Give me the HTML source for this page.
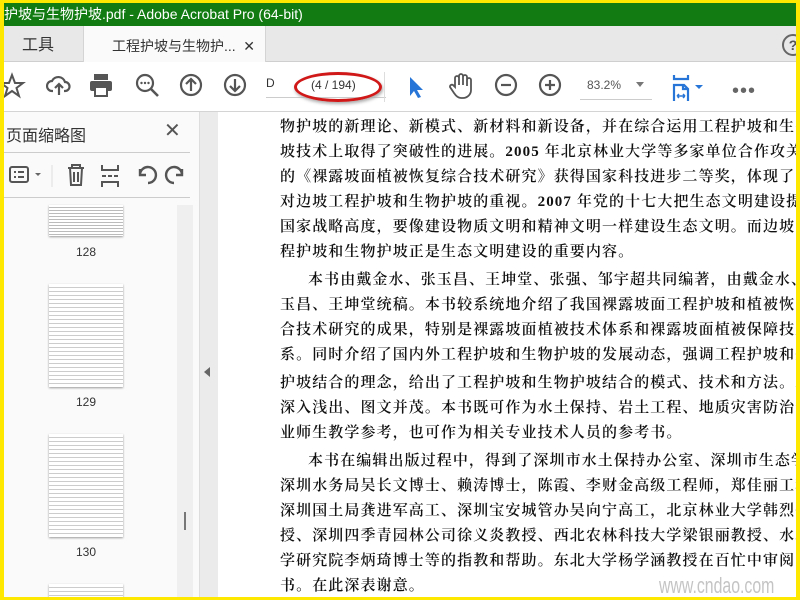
<!DOCTYPE html>
<html><head><meta charset="utf-8"><style>
*{margin:0;padding:0;box-sizing:border-box}
body{width:800px;height:600px;overflow:hidden;background:#ffe800;position:relative;font-family:"Liberation Sans","Noto Sans CJK SC",sans-serif}
#app{position:absolute;left:4px;top:3px;width:792px;height:594px;background:#fff;overflow:hidden}
#title{position:absolute;left:0;top:0;width:792px;height:23px;background:#127c12;color:#fff;font-size:14px;line-height:23px;padding-left:0;white-space:nowrap}
#tabs{position:absolute;left:0;top:23px;width:792px;height:36px;background:#e8e8e8;border-bottom:1px solid #cfcfcf}
#tools{position:absolute;left:0;top:0;width:79px;height:36px;font-size:16px;color:#333;line-height:40px;padding-left:18px}
#tab{position:absolute;left:79px;top:0;width:183px;height:37px;background:#fafafa;border-left:1px solid #d4d4d4;border-right:1px solid #d4d4d4;font-size:14px;color:#333;line-height:40px;padding-left:28px}
#tab span{position:absolute;right:10px;top:0;font-size:14px}
#help{position:absolute;right:-8px;top:8px;width:22px;height:22px;border:2px solid #666;border-radius:50%;font-weight:bold;color:#555;font-size:14px;text-align:center;line-height:18px}
#tb{position:absolute;left:0;top:59px;width:792px;height:50px;background:#fff;border-bottom:1px solid #d4d4d4}
.ic{position:absolute;top:10px}
#panel{position:absolute;left:0;top:109px;width:196px;height:485px;background:#fafafa;border-right:1px solid #ddd}
#gut{position:absolute;left:196px;top:109px;width:18px;height:485px;background:#ebebeb}
#page{position:absolute;left:214px;top:109px;width:578px;height:485px;background:#fff;overflow:hidden}
.ln{position:absolute;left:62px;white-space:nowrap;font-family:"Liberation Serif","Noto Serif CJK SC",serif;font-size:15px;letter-spacing:1.1px;color:#111;font-weight:600}
.thumb{position:absolute;left:45px;width:74px;background:#fff;box-shadow:0 1px 2px #999}
.num{position:absolute;left:0;width:170px;text-align:center;font-size:12px;color:#333}
</style></head><body><div id="app">
<div id="title">护坡与生物护坡.pdf - Adobe Acrobat Pro (64-bit)</div>
<div id="tabs"><div id="tools">工具</div><div id="tab">工程护坡与生物护...<span>✕</span></div><div id="help">?</div></div>
<div id="tb">
<svg class="ic" style="left:-6px" width="28" height="28" viewBox="0 0 28 28"><path d="M14 3l3 8h8l-6.5 5 2.5 8-7-5-7 5 2.5-8L3 11h8z" fill="none" stroke="#555" stroke-width="2"/></svg>
<svg class="ic" style="left:42px" width="26" height="26" viewBox="0 0 26 26"><path d="M7 19H6a5 5 0 0 1 0-10 7 7 0 0 1 13 1 4.5 4.5 0 0 1 0 9h-1M13 23V12M9 16l4-4 4 4" fill="none" stroke="#555" stroke-width="2.2"/></svg>
<svg class="ic" style="left:84px" width="26" height="26" viewBox="0 0 26 26"><rect x="6" y="2" width="14" height="6" fill="#555"/><rect x="2" y="9" width="22" height="10" rx="2" fill="#555"/><rect x="7" y="15" width="12" height="9" fill="#fff" stroke="#555" stroke-width="2"/></svg>
<svg class="ic" style="left:130px" width="26" height="26" viewBox="0 0 26 26"><circle cx="11" cy="11" r="8" fill="none" stroke="#555" stroke-width="2.2"/><path d="M17 17l7 7" stroke="#555" stroke-width="2.6"/><circle cx="7.5" cy="11" r="1.2" fill="#555"/><circle cx="11" cy="11" r="1.2" fill="#555"/><circle cx="14.5" cy="11" r="1.2" fill="#555"/></svg>
<svg class="ic" style="left:174px" width="26" height="26" viewBox="0 0 26 26"><circle cx="13" cy="13" r="10" fill="none" stroke="#555" stroke-width="2.2"/><path d="M13 19V7M8 12l5-5 5 5" fill="none" stroke="#555" stroke-width="2.2"/></svg>
<svg class="ic" style="left:218px" width="26" height="26" viewBox="0 0 26 26"><circle cx="13" cy="13" r="10" fill="none" stroke="#555" stroke-width="2.2"/><path d="M13 7v12M8 14l5 5 5-5" fill="none" stroke="#555" stroke-width="2.2"/></svg>
<div style="position:absolute;left:262px;top:14px;width:120px;height:22px;border-bottom:1px solid #ccc;font-size:12px;color:#333">D<span style="position:absolute;left:45px;top:2px">(4 / 194)</span></div>
<div style="position:absolute;left:290px;top:10px;width:88px;height:30px;border:3px solid #d01818;border-radius:50%;box-shadow:1px 2px 3px #aaa"></div>
<div style="position:absolute;left:380px;top:10px;width:1px;height:30px;background:#ddd"></div>
<svg class="ic" style="left:402px;top:13px" width="20" height="24" viewBox="0 0 20 24"><path d="M4 2v19l4-5 4 7 3-1-4-7h6z" fill="#2775d6"/></svg>
<svg class="ic" style="left:444px" width="26" height="28" viewBox="0 0 26 28"><path d="M7 15V6a2 2 0 0 1 4 0v7V4a2 2 0 0 1 4 0v9V5a2 2 0 0 1 4 0v9V8a2 2 0 0 1 4 0v10a8 8 0 0 1-8 8h-2c-3 0-5-2-7-5l-4-6a2 2 0 0 1 3-2z" fill="none" stroke="#555" stroke-width="1.8"/></svg>
<svg class="ic" style="left:489px" width="26" height="26" viewBox="0 0 26 26"><circle cx="13" cy="13" r="10" fill="none" stroke="#555" stroke-width="2.2"/><path d="M8 13h10" stroke="#555" stroke-width="2.2"/></svg>
<svg class="ic" style="left:533px" width="26" height="26" viewBox="0 0 26 26"><circle cx="13" cy="13" r="10" fill="none" stroke="#555" stroke-width="2.2"/><path d="M8 13h10M13 8v10" stroke="#555" stroke-width="2.2"/></svg>
<div style="position:absolute;left:576px;top:14px;width:72px;height:24px;border-bottom:1px solid #ccc;font-size:12px;color:#555;padding-left:7px;line-height:18px">83.2%<span style="position:absolute;right:8px;top:6px;border:4px solid transparent;border-top:5px solid #777"></span></div>
<svg class="ic" style="left:668px;top:13px" width="36" height="26" viewBox="0 0 36 26"><path d="M2 0v4h14V0M2 26V10h10l4 4v12M11 10v4h5" fill="none" stroke="#2775d6" stroke-width="2.2"/><path d="M5 21h8M5 21l2-2M5 21l2 2M13 21l-2-2M13 21l-2 2" stroke="#2775d6" stroke-width="1.5"/><path d="M23 10h8l-4 4z" fill="#2775d6"/></svg>
<div style="position:absolute;left:728px;top:24px;font-size:20px;color:#666;letter-spacing:1px;line-height:10px">•••</div>
</div>
<div id="panel">
<div style="position:absolute;left:2px;top:10px;font-size:16px;color:#333">页面缩略图</div>
<div style="position:absolute;left:160px;top:6px;font-size:20px;color:#555">✕</div>
<div style="position:absolute;left:0;top:40px;width:186px;height:1px;background:#ccc"></div>
<svg style="position:absolute;left:2px;top:50px" width="180" height="26" viewBox="0 0 180 26"><rect x="4" y="5" width="18" height="15" rx="2" fill="none" stroke="#555" stroke-width="2"/><path d="M8 10h2M12 10h6M8 15h2M12 15h6" stroke="#555" stroke-width="2"/><path d="M29 11h6l-3 3z" fill="#666"/><path d="M46 3v22" stroke="#ddd"/><path d="M62 6h16M66 6V3h8v3M64 6l1 17h10l1-17M68 10v10M72 10v10" fill="none" stroke="#555" stroke-width="2"/><path d="M96 3v5h16V3M96 25v-5h16v5M96 14h4M102 14h4M108 14h4" fill="none" stroke="#555" stroke-width="2"/><path d="M142 21a8 8 0 1 0-8-9M134 7v6h6" fill="none" stroke="#555" stroke-width="2.4"/><path d="M168 21a8 8 0 1 1 8-9" fill="none" stroke="#555" stroke-width="2.4"/><path d="M176 7v6h-6" fill="none" stroke="#555" stroke-width="2.4"/></svg>
<div style="position:absolute;left:0;top:85px;width:186px;height:1px;background:#ccc"></div>
<div style="position:absolute;left:173px;top:93px;width:16px;height:392px;background:#efefef"></div>
<div style="position:absolute;left:180px;top:400px;width:2px;height:18px;background:#777"></div>
<div class="thumb" style="top:93px;height:31px;background:repeating-linear-gradient(#fff 0 2px,#bbb 2px 3px)"></div>
<div class="num" style="top:133px;left:-3px">128</div>
<div class="thumb" style="top:172px;height:103px;background:repeating-linear-gradient(#fff 0 3px,#ccc 3px 4px)"></div>
<div class="num" style="top:283px;left:-3px">129</div>
<div class="thumb" style="top:322px;height:103px;background:repeating-linear-gradient(#fff 0 3px,#ccc 3px 4px)"></div>
<div class="num" style="top:433px;left:-3px">130</div>
<div class="thumb" style="top:472px;height:20px;background:repeating-linear-gradient(#fff 0 3px,#ccc 3px 4px)"></div>
</div>
<div id="gut"><div style="position:absolute;left:4px;top:255px;border:5px solid transparent;border-right:6px solid #666;border-left:0"></div></div>
<div id="page">
<div class="ln" style="top:3px">物护坡的新理论、新模式、新材料和新设备，并在综合运用工程护坡和生态</div>
<div class="ln" style="top:28px">坡技术上取得了突破性的进展。2005 年北京林业大学等多家单位合作攻关</div>
<div class="ln" style="top:53px">的《裸露坡面植被恢复综合技术研究》获得国家科技进步二等奖，体现了</div>
<div class="ln" style="top:78px">对边坡工程护坡和生物护坡的重视。2007 年党的十七大把生态文明建设提</div>
<div class="ln" style="top:103px">国家战略高度，要像建设物质文明和精神文明一样建设生态文明。而边坡</div>
<div class="ln" style="top:128px">程护坡和生物护坡正是生态文明建设的重要内容。</div>
<div class="ln" style="top:156px;left:90px">本书由戴金水、张玉昌、王坤堂、张强、邹宇超共同编著，由戴金水、张</div>
<div class="ln" style="top:181px">玉昌、王坤堂统稿。本书较系统地介绍了我国裸露坡面工程护坡和植被恢复</div>
<div class="ln" style="top:206px">合技术研究的成果，特别是裸露坡面植被技术体系和裸露坡面植被保障技术</div>
<div class="ln" style="top:231px">系。同时介绍了国内外工程护坡和生物护坡的发展动态，强调工程护坡和生</div>
<div class="ln" style="top:259px">护坡结合的理念，给出了工程护坡和生物护坡结合的模式、技术和方法。本</div>
<div class="ln" style="top:284px">深入浅出、图文并茂。本书既可作为水土保持、岩土工程、地质灾害防治专</div>
<div class="ln" style="top:309px">业师生教学参考，也可作为相关专业技术人员的参考书。</div>
<div class="ln" style="top:337px;left:90px">本书在编辑出版过程中，得到了深圳市水土保持办公室、深圳市生态学会</div>
<div class="ln" style="top:362px">深圳水务局吴长文博士、赖涛博士，陈霞、李财金高级工程师，郑佳丽工程</div>
<div class="ln" style="top:387px">深圳国土局龚进军高工、深圳宝安城管办吴向宁高工，北京林业大学韩烈保</div>
<div class="ln" style="top:412px">授、深圳四季青园林公司徐义炎教授、西北农林科技大学梁银丽教授、水利</div>
<div class="ln" style="top:437px">学研究院李炳琦博士等的指教和帮助。东北大学杨学涵教授在百忙中审阅了</div>
<div class="ln" style="top:462px">书。在此深表谢意。</div>
<div style="position:absolute;left:441px;top:461px;font-family:'Liberation Sans',sans-serif;font-size:22px;color:#c4c4c4;transform:scaleX(0.72);transform-origin:left top;white-space:nowrap">www.cndao.com</div>
</div>
</div></body></html>
